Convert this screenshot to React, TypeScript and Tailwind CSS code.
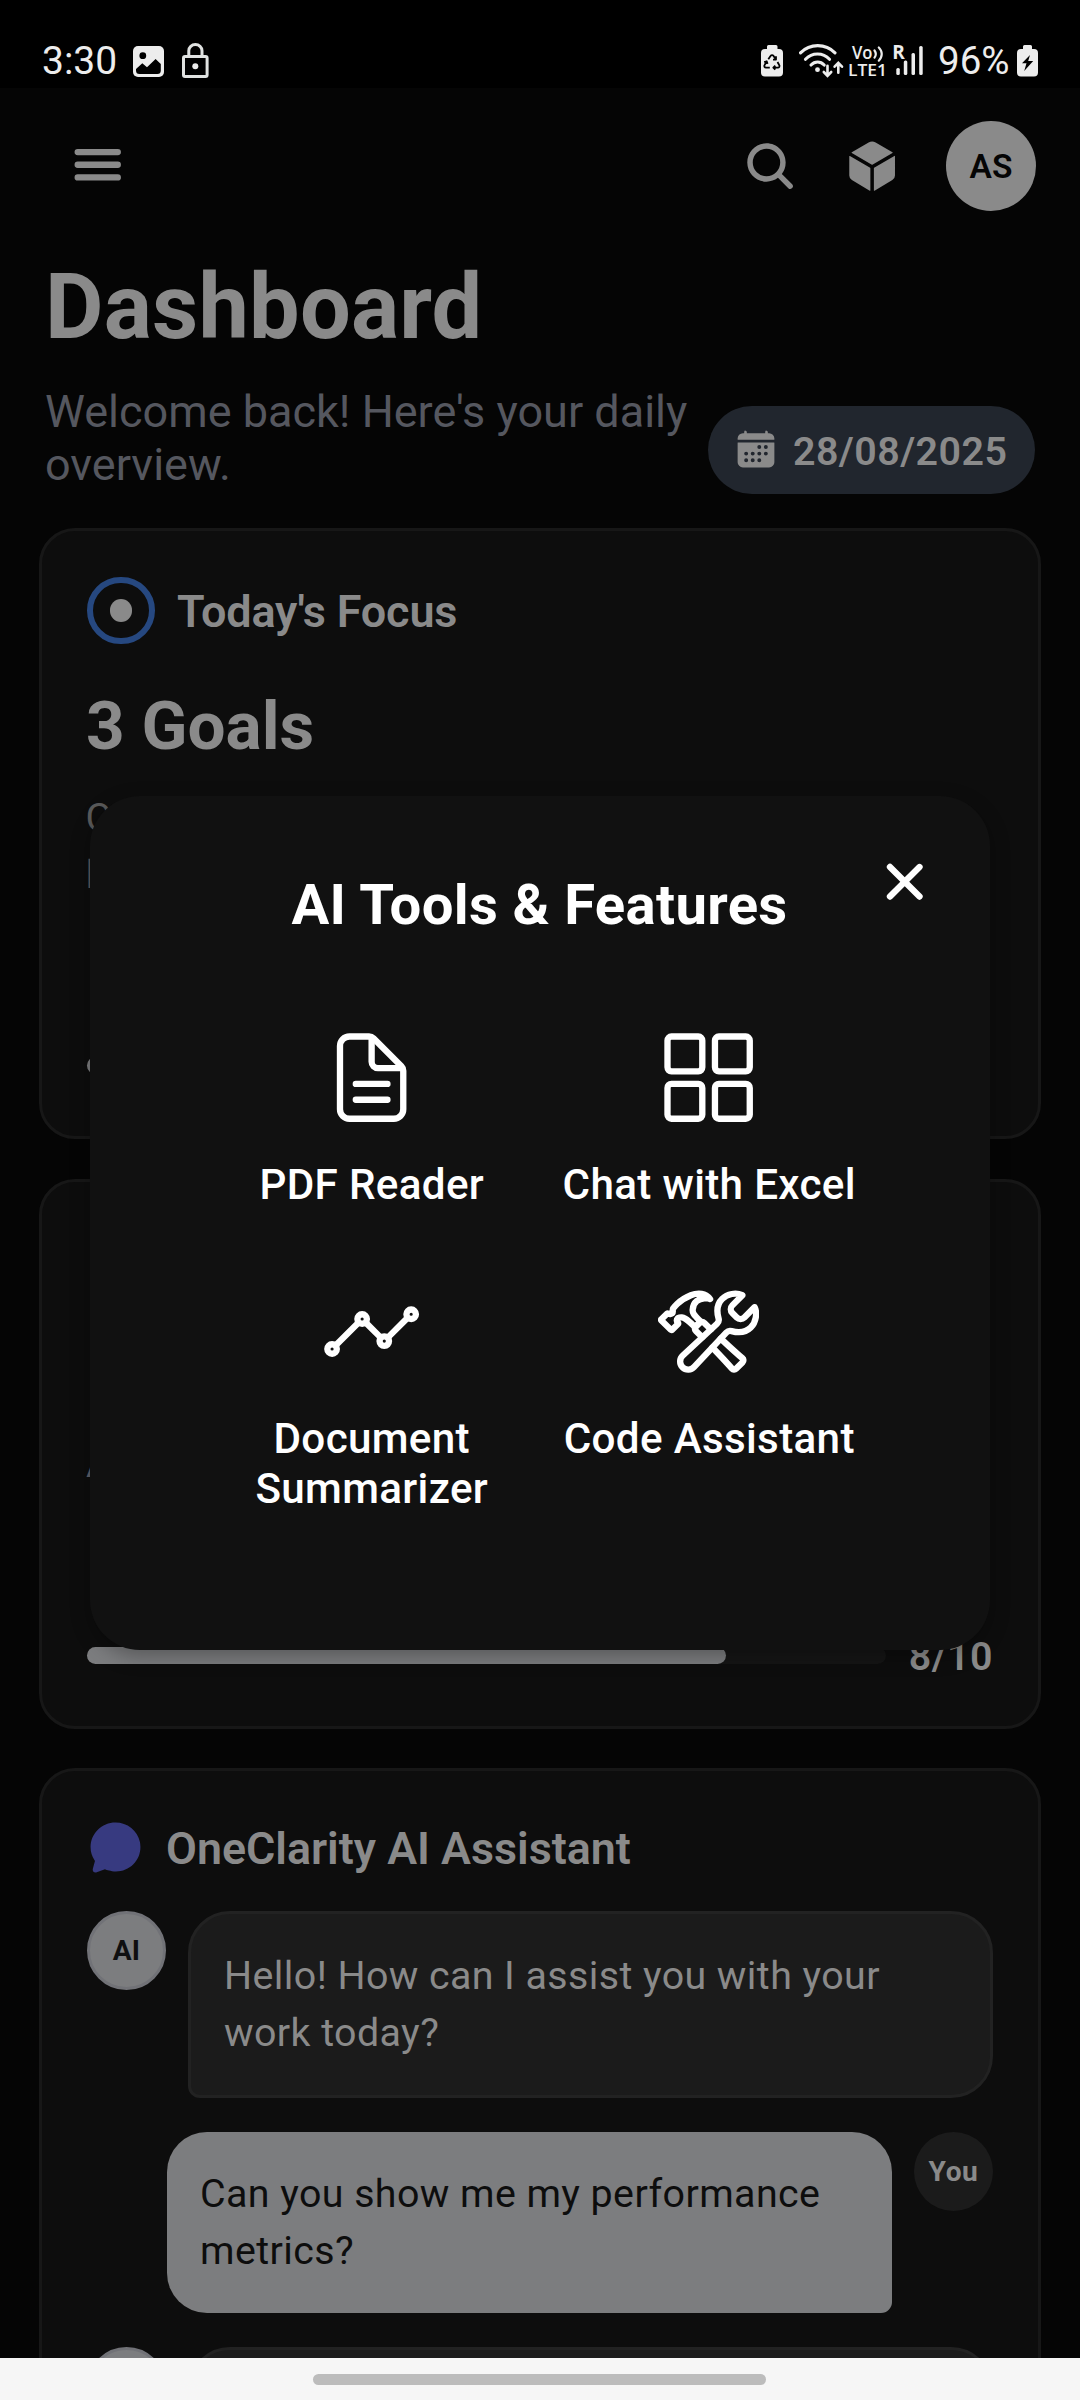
import React from "react";
import type { ReactNode } from "react";
import {
  IoAnalyticsOutline,
  IoCalendar,
  IoChatbubble,
  IoClose,
  IoConstructOutline,
  IoCube,
  IoDocumentTextOutline,
  IoGridOutline,
  IoSearch,
} from "react-icons/io5";

function ImageIcon() {
  return (
    <svg className="h-[31px] w-[31px]" viewBox="133 46 31 31">
      <rect x="133" y="46" width="31" height="31" rx="5" fill="#ededed" />
      <circle cx="142.8" cy="55.7" r="3.4" fill="#000" />
      <path d="M136 69l6.3-5.7 4.7 4L155.6 59l5.2 5v6.5a3.5 3.5 0 0 1-3.5 3.5h-17.8a3.5 3.5 0 0 1-3.5-3.5z" fill="#000" />
    </svg>
  );
}

function LockIcon() {
  return (
    <svg className="h-[36px] w-[28px]" viewBox="181 43 28 36" fill="none" stroke="#e0e2e1" strokeWidth="3">
      <rect x="183.5" y="56.5" width="23.6" height="20" rx="1.5" />
      <path d="M188.8 56v-5.2a6.6 6.2 0 0 1 13.2 0V56" />
      <circle cx="195.3" cy="66.3" r="3" fill="#ededed" stroke="none" />
    </svg>
  );
}

function RecycleBatteryIcon() {
  return (
    <svg className="h-[32px] w-[22px]" viewBox="0 0 22 32">
      <path d="M7.5 0h7.500a1.500 1.500 0 0 1 1.500 1.500V4h1.500a4 4 0 0 1 4 4v19.500a4 4 0 0 1-4 4H4a4 4 0 0 1-4-4V8a4 4 0 0 1 4-4h2V1.500A1.500 1.500 0 0 1 7.500 0z" fill="#ededed" />
      <g fill="none" stroke="#000" strokeWidth="1.800" strokeLinejoin="round">
        <path d="M7.300 14.200l2.400-3.400a1.600 1.600 0 0 1 2.700 0l2.200 3.300M15 11.300v3.300h-3" />
        <path d="M16.500 17l1.700 3a1.700 1.700 0 0 1-1.500 2.700h-4M14.300 20.700l-2 2 2 2" />
        <path d="M8.800 22.700H5a1.700 1.700 0 0 1-1.400-2.700l2-3.500M3.200 17.200l2.500-.9.900 2.600" />
      </g>
    </svg>
  );
}

function WifiIcon() {
  return (
    <svg className="h-[35px] w-[46px]" viewBox="799 43 46 35" fill="none" stroke="#ededed" strokeWidth="3.100" strokeLinecap="round">
      <path d="M800.500 52.800C810 43.200 825.500 43.200 835 52.800" />
      <path d="M805.500 59.300c6.500-7 17.500-7 24 0" />
      <path d="M811 65c3.800-4 9.500-4 13.200 0" />
      <circle cx="817.500" cy="69.700" r="2.400" fill="#ededed" stroke="none" />
      <path d="M827.500 65.800v9.700M823.800 72l3.700 3.800 3.700-3.800" strokeWidth="2.600" />
      <path d="M838.300 72.700v-9.500M834.600 66.700l3.700-3.900 3.700 3.900" strokeWidth="2.600" />
    </svg>
  );
}

function VolteIcon() {
  return (
    <svg className="h-[34px] w-[41px] overflow-visible" viewBox="847 44 41 34">
      <g fill="#ededed" fontFamily="'Open Sans', 'Noto Sans', sans-serif" fontWeight="600">
        <text x="852" y="59" fontSize="17.500" textLength="20.500" lengthAdjust="spacingAndGlyphs">Vo</text>
        <text x="848" y="76" fontSize="17" textLength="39" lengthAdjust="spacingAndGlyphs">LTE1</text>
      </g>
      <g fill="none" stroke="#ededed" strokeWidth="2.200" strokeLinecap="round">
        <path d="M874.500 50.500c1.600 2.200 1.600 5 0 7.200" />
        <path d="M878.800 47.500c3.900 3.800 3.900 9.400 0 13.200" />
      </g>
    </svg>
  );
}

function SignalIcon() {
  return (
    <svg className="h-[34px] w-[32px] overflow-visible" viewBox="892 43 32 34">
      <text x="892.300" y="58.800" fontSize="19" fontWeight="700" fill="#ededed" fontFamily="'Open Sans', 'Noto Sans', sans-serif">R</text>
      <g fill="#ededed">
        <rect x="896.300" y="68" width="3.500" height="7" rx="1.500" />
        <rect x="903.800" y="60.500" width="3.500" height="14.500" rx="1.500" />
        <rect x="911.500" y="53" width="3.500" height="22" rx="1.500" />
        <rect x="919.200" y="46" width="3.500" height="29" rx="1.500" />
      </g>
    </svg>
  );
}

function ChargingBatteryIcon() {
  return (
    <svg className="h-[32px] w-[21px]" viewBox="0 0 21 32">
      <path d="M7.500 0h6A1.500 1.500 0 0 1 15 1.500V4h2a4 4 0 0 1 4 4v19.500a4 4 0 0 1-4 4H4a4 4 0 0 1-4-4V8a4 4 0 0 1 4-4h2V1.500A1.500 1.500 0 0 1 7.500 0z" fill="#ededed" />
      <path d="M13 10L5 18.200h4.500L7.200 26l9-10h-5L13 10z" fill="#000" />
    </svg>
  );
}

function MenuIcon() {
  return (
    <svg className="mb-[3px] h-[67.500px] w-[67.500px]" viewBox="0 0 512 512" fill="none" stroke="#8a8a8a" strokeWidth="48" strokeLinecap="round">
      <path d="M104 160h304M104 256h304M104 352h304" />
    </svg>
  );
}

function StatusBar() {
  return (
    <div className="flex h-[88px] shrink-0 items-start bg-black text-[#ededed]">
      <span className="ml-[42px] mt-[38px] text-[39px] leading-[46px]">3:30</span>
      <div className="ml-[16px] mt-[46px]"><ImageIcon /></div>
      <div className="ml-[17px] mt-[43px]"><LockIcon /></div>
      <div className="ml-auto mt-[45px]"><RecycleBatteryIcon /></div>
      <div className="ml-[16px] mt-[43px]"><WifiIcon /></div>
      <div className="ml-[2px] mt-[44px]"><VolteIcon /></div>
      <div className="ml-[4px] mt-[43px]"><SignalIcon /></div>
      <span className="ml-[14px] mt-[38px] w-[72px] text-[38.500px] leading-[46px]">96%</span>
      <div className="ml-[7px] mr-[42px] mt-[45px]"><ChargingBatteryIcon /></div>
    </div>
  );
}

function Card({ className, children }: { className: string; children?: ReactNode }) {
  return (
    <section className={`mx-[39px] flex shrink-0 flex-col rounded-[36px] border-[3px] border-[#171717] bg-[#0d0d0d] px-[45px] pt-[45px] ${className}`}>
      {children}
    </section>
  );
}

function AiAvatar() {
  return (
    <div className="flex h-[79px] w-[79px] shrink-0 items-center justify-center rounded-full border-[3px] border-[#717277] bg-[#7c7d7f] pt-[2px] text-[28.125px] font-bold tracking-[0.3px] text-[#0f0f10]">
      AI
    </div>
  );
}

function AiMessage({ text }: { text: string }) {
  return (
    <div className="flex items-start gap-[22px]">
      <AiAvatar />
      <div className="min-h-[187px] flex-1 rounded-[42px] rounded-bl-[12px] border-[3px] border-[#222222] bg-[#1b1b1b] px-[33px] pt-[33px] text-[39.375px] leading-[57px] tracking-[0.420px] text-[#8a8a8a]">
        {text}
      </div>
    </div>
  );
}

function UserMessage({ text }: { text: string }) {
  return (
    <div className="flex items-start justify-end gap-[22px]">
      <div className="h-[181px] w-[725px] rounded-[40px] rounded-br-[11px] bg-[#7c7d7f] px-[33px] pt-[33px] text-[39.375px] leading-[57px] tracking-[0.420px] text-[#0d0d0d]">
        {text}
      </div>
      <div className="flex h-[79px] w-[79px] shrink-0 items-center justify-center rounded-full bg-[#1b1b1b] pt-[2px] text-[28.125px] font-bold tracking-[0.560px] text-[#8a8a8a]">
        You
      </div>
    </div>
  );
}

const tools = [
  { label: "PDF Reader", Icon: IoDocumentTextOutline },
  { label: "Chat with Excel", Icon: IoGridOutline },
  { label: "Document Summarizer", Icon: IoAnalyticsOutline },
  { label: "Code Assistant", Icon: IoConstructOutline },
];

function ToolsModal() {
  return (
    <div className="absolute inset-0 flex items-center justify-center">
      <div className="relative flex h-[854px] w-[900px] flex-col items-center rounded-[50px] bg-[#111111] pt-[75px] text-white shadow-[0_6px_20px_rgba(0,0,0,0.3)]">
        <button className="absolute right-[52px] top-[52px]">
          <IoClose className="h-[67.500px] w-[67.500px]" />
        </button>
        <h2 className="mr-[1px] text-[56.250px] font-bold leading-[68px] tracking-[0.340px]">AI Tools &amp; Features</h2>
        <div className="mt-[87.500px] grid auto-rows-[254px] grid-cols-[337.500px_337.500px]">
          {tools.map(({ label, Icon }) => (
            <div key={label} className="flex flex-col items-center">
              <Icon className="h-[101.250px] w-[101.250px]" />
              <span className="mt-[32px] pl-2 pr-[7px] text-center text-[42.200px] font-medium leading-[50.600px] tracking-[0.330px]">{label}</span>
            </div>
          ))}
        </div>
      </div>
    </div>
  );
}

export default function App() {
  return (
    <div className="flex h-[2400px] w-[1080px] flex-col overflow-hidden bg-[#050505] font-['Roboto',sans-serif] text-[#8a8a8a]">
      <StatusBar />

      <main className="relative flex h-[2270px] shrink-0 flex-col overflow-hidden">
        <header className="mt-[33px] flex h-[90px] shrink-0 items-center pl-[64px] pr-[44px]">
          <MenuIcon />
          <div className="ml-auto flex items-center gap-[46px]">
            <IoSearch className="h-[56.250px] w-[56.250px]" />
            <IoCube className="h-[56.250px] w-[56.250px]" />
            <div className="flex h-[90px] w-[90px] items-center justify-center rounded-full bg-[#8a8a8a] pt-[3px] text-[33.500px] font-semibold text-[#050505]">
              AS
            </div>
          </div>
        </header>

        <h1 className="ml-[45px] mt-[44px] shrink-0 text-[90px] font-bold leading-[106px] tracking-[0.200px]">Dashboard</h1>

        <div className="ml-[45px] mr-[45px] mt-[24px] flex h-[109px] shrink-0 items-start justify-between">
          <p className="w-[655px] text-[45px] leading-[53px] text-[#55575f]">Welcome back! Here's your daily overview.</p>
          <div className="mt-[21px] flex h-[88px] w-[327px] shrink-0 items-center whitespace-nowrap rounded-full bg-[#21262e] pl-[27px]">
            <IoCalendar className="h-[42px] w-[42px] shrink-0 -translate-y-px" />
            <span className="ml-[16px] pt-[3px] text-[39.375px] font-semibold tracking-[0.450px]">28/08/2025</span>
          </div>
        </div>

        <Card className="mt-[34px] h-[611px]">
          <div className="flex h-[68px] shrink-0 items-center">
            <div className="flex h-[67px] w-[68px] items-center justify-center rounded-full border-[6px] border-[#264880]">
              <div className="h-[23px] w-[22px] rounded-full bg-[#8a8a8a]" />
            </div>
            <h3 className="ml-[22px] pt-[3px] text-[45px] font-semibold leading-[53px] tracking-[-0.200px]">Today's Focus</h3>
          </div>
          <div className="-ml-[1px] mt-[42px] text-[67.500px] font-bold leading-[80px]">3 Goals</div>
          <p className="-ml-[1.500px] mt-[23px] text-[39.375px] leading-[57px] text-[#5a5a5a]">C<br />l</p>
          <div className="mt-[154px] h-[17px] w-[400px] rounded-full bg-[#7c7d7f]" />
        </Card>

        <Card className="mt-[40px] h-[550px]">
          <p className="-ml-[1px] mt-[209px] text-[39.375px] leading-[56px] text-[#5f6169]">A</p>
          <div className="mt-[141px] flex h-[48px] items-center">
            <div className="mb-[3px] h-[17px] w-[799px] rounded-full bg-[#151515]">
              <div className="h-full w-[80%] rounded-full bg-[#7c7d7f]" />
            </div>
            <span className="ml-auto text-[39.375px] font-semibold leading-[48px] tracking-[0.450px]">8/10</span>
          </div>
        </Card>

        <Card className="mt-[39px] h-[900px]">
          <div className="flex h-[62px] shrink-0 items-center">
            <IoChatbubble className="h-[57px] w-[57px] text-[#373a80]" />
            <h3 className="ml-[22px] pt-[3px] text-[44.800px] font-semibold leading-[53px]">OneClarity AI Assistant</h3>
          </div>
          <div className="mt-[33px] flex flex-col gap-[34px]">
            <AiMessage text="Hello! How can I assist you with your work today?" />
            <UserMessage text="Can you show me my performance metrics?" />
            <AiMessage text="" />
          </div>
        </Card>

        <ToolsModal />
      </main>

      <nav className="flex h-[42px] shrink-0 justify-center bg-[#f6f6f6] pr-[2px] pt-[16px]">
        <div className="h-[11px] w-[453px] rounded-full bg-[#bcbcbc]" />
      </nav>
    </div>
  );
}
